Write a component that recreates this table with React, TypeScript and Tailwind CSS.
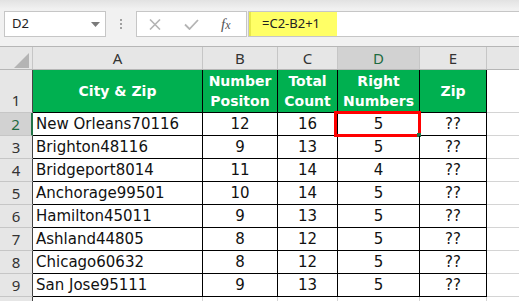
import React from 'react';

const rows = [
    { n: 2, city: 'New Orleans70116', pos: 12, total: 16, right: 5 },
    { n: 3, city: 'Brighton48116', pos: 9, total: 13, right: 5 },
    { n: 4, city: 'Bridgeport8014', pos: 11, total: 14, right: 4 },
    { n: 5, city: 'Anchorage99501', pos: 10, total: 14, right: 5 },
    { n: 6, city: 'Hamilton45011', pos: 9, total: 13, right: 5 },
    { n: 7, city: 'Ashland44805', pos: 8, total: 12, right: 5 },
    { n: 8, city: 'Chicago60632', pos: 8, total: 12, right: 5 },
    { n: 9, city: 'San Jose95111', pos: 9, total: 13, right: 5 },
];

const uiFont = "font-['Noto_Sans',sans-serif]";
const cellFont = "font-['DejaVu_Sans',Verdana,sans-serif]";

const Toolbar: React.FC = () => (
    <div className="h-[46px] flex items-start pt-[11px] pl-[4px] bg-[linear-gradient(#e2e2e2,#f1f1f1_9px)]">
        <div className={`w-[102px] h-[26px] bg-white border border-[#c6c6c6] flex items-center justify-between pl-[7px] pr-[5px] text-[13px] text-[#222] ${uiFont}`}>
            <span>D2</span>
            <svg width="9" height="5" viewBox="0 0 9 5"><path d="M0 0h9L4.5 5z" fill="#7a7a7a" /></svg>
        </div>
        <div className="w-[30px] h-[26px] flex flex-col items-center justify-center gap-[2px]">
            <span className="w-[2px] h-[2px] bg-[#a0a0a0]" />
            <span className="w-[2px] h-[2px] bg-[#a0a0a0]" />
            <span className="w-[2px] h-[2px] bg-[#a0a0a0]" />
        </div>
        <div className="w-[111px] h-[26px] bg-white border border-[#c6c6c6] flex items-center">
            <svg className="ml-[12px]" width="12" height="11" viewBox="0 0 12 11">
                <path d="M1 0.5l10 10M11 0.5l-10 10" stroke="#b4b4b4" strokeWidth="1.6" />
            </svg>
            <svg className="ml-[23px]" width="15" height="11" viewBox="0 0 15 11">
                <path d="M1 5.5l4.5 4.5L14 1" stroke="#b4b4b4" strokeWidth="1.8" fill="none" />
            </svg>
            <span className="ml-[22px] text-[15px] italic text-[#555] font-['Liberation_Serif',serif] leading-none">
                f<span className="text-[12px]">x</span>
            </span>
        </div>
        <div className="flex-1 h-[26px] ml-[1px] bg-white border border-[#c6c6c6] border-r-0 flex">
            <div className={`w-[88px] h-full bg-[#ffff66] border-l-2 border-[#e8e84a] flex items-center pl-[11px] text-[13px] text-[#222] ${uiFont}`}>
                =C2-B2+1
            </div>
        </div>
    </div>
);

const ColHeader: React.FC<{ w: string; label: string; active?: boolean }> = ({ w, label, active }) => (
    <div className={`${w} h-full border-r border-[#c6c6c6] flex items-center justify-center text-[15px] ${uiFont} ${active ? 'bg-[#d2d2d2] text-[#1e6b41]' : 'text-[#333]'}`}>
        {label}
    </div>
);

const RowHeader: React.FC<{ n?: number; active?: boolean; bottom?: boolean; last?: boolean }> = ({ n, active, bottom, last }) => (
    <div className={`w-[33px] shrink-0 h-full flex justify-center text-[15px] ${uiFont} ${bottom ? 'items-end pb-[1px]' : 'items-center'} ${last ? '' : 'border-b border-[#c6c6c6]'} ${active ? 'bg-[#d2d2d2] text-[#1e6b41] border-r-2 border-r-[#217346]' : 'bg-[#e6e6e6] text-[#333] border-r border-r-[#444]'}`}>
        {n}
    </div>
);

export default function App() {
    return (
        <div className="w-[519px] h-[301px] overflow-hidden bg-white">
            <Toolbar />
            {/* column headers */}
            <div className="h-[24px] flex bg-[#e6e6e6] border-t border-b border-[#b6b6b6]">
                <div className="w-[33px] h-full border-r border-[#c6c6c6] flex items-end justify-end pr-[3px] pb-[1px]">
                    <svg width="15" height="15" viewBox="0 0 15 15"><path d="M15 0v15H0z" fill="#b4b4b4" /></svg>
                </div>
                <ColHeader w="w-[170px]" label="A" />
                <ColHeader w="w-[75px]" label="B" />
                <ColHeader w="w-[60px]" label="C" />
                <ColHeader w="w-[82px]" label="D" active />
                <ColHeader w="w-[67px]" label="E" />
                <div className="flex-1" />
            </div>

            {/* row 1: green titles */}
            <div className="h-[43px] flex">
                <RowHeader n={1} bottom />
                <div className={`flex text-white font-bold text-[14px] leading-[20px] text-center ${cellFont}`}>
                    <div className="w-[170px] bg-[#00b050] border-r border-b border-black flex items-center justify-center">City &amp; Zip</div>
                    <div className="w-[75px] bg-[#00b050] border-r border-b border-black flex items-center justify-center">Number<br />Positon</div>
                    <div className="w-[60px] bg-[#00b050] border-r border-b border-black flex items-center justify-center">Total<br />Count</div>
                    <div className="w-[82px] bg-[#00b050] border-r border-b border-black flex items-center justify-center">Right<br />Numbers</div>
                    <div className="w-[67px] bg-[#00b050] border-r border-b border-black flex items-center justify-center">Zip</div>
                </div>
                <div className="flex-1 border-b border-[#d4d4d4]" />
            </div>

            {/* data rows */}
            {rows.map((r) => (
                <div key={r.n} className={`h-[23px] flex text-[15px] text-[#111] ${cellFont}`}>
                    <RowHeader n={r.n} active={r.n === 2} />
                    <div className="w-[170px] border-r border-b border-black flex items-center pl-[3px]">{r.city}</div>
                    <div className="w-[75px] border-r border-b border-black flex items-center justify-center">{r.pos}</div>
                    <div className="w-[60px] border-r border-b border-black flex items-center justify-center">{r.total}</div>
                    <div className="relative w-[82px] border-r border-b border-black flex items-center justify-center">
                        {r.right}
                        {r.n === 2 && (
                            <div className="absolute -top-[2px] -left-[4px] -right-[2px] -bottom-[2px] border-[3px] border-[#ff0000]">
                                <span className="absolute -right-[3px] -bottom-[3px] w-[4px] h-[4px] bg-[#217346]" />
                            </div>
                        )}
                    </div>
                    <div className="w-[67px] border-r border-b border-black flex items-center justify-center">??</div>
                    <div className="flex-1 border-b border-[#d4d4d4]" />
                </div>
            ))}

            {/* row 10, only its top edge shows */}
            <div className="h-[23px] flex">
                <RowHeader last />
                <div className="w-[170px] border-r border-[#d4d4d4]" />
                <div className="w-[75px] border-r border-[#d4d4d4]" />
                <div className="w-[60px] border-r border-[#d4d4d4]" />
                <div className="w-[82px] border-r border-[#d4d4d4]" />
                <div className="w-[67px] border-r border-[#d4d4d4]" />
                <div className="flex-1" />
            </div>
        </div>
    );
}
